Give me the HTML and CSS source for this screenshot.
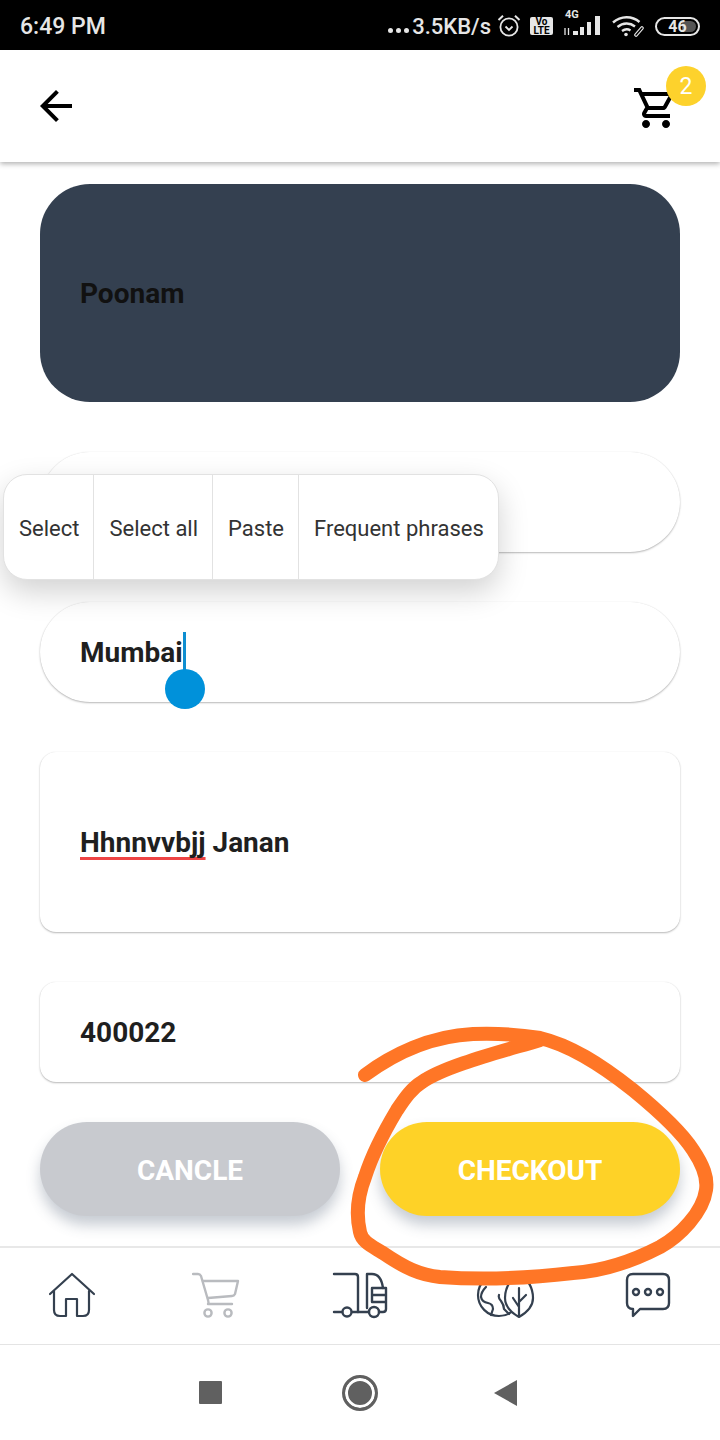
FILE: index.html
```html
<!DOCTYPE html>
<html>
<head>
  <title>Checkout</title>
  <link rel="stylesheet" href="styles.css">
</head>
<body>
  <div class="screen">
    <div class="status-bar">
      <span class="clock">6:49 PM</span>
      <div class="status-right">
        <span class="dots"><i></i><i></i><i></i></span>
        <span class="speed">3.5KB/s</span>
        <svg class="st-alarm" width="24" height="24" viewBox="0 0 24 24" fill="none" stroke="#e6e6e6" stroke-width="1.8">
          <circle cx="12" cy="13" r="8.6"/>
          <path d="M8.5 12.5l3.5 3.5 3.5-3.5"/>
          <path d="M1.5 6L6 1.8M22.5 6L18 1.8" stroke-width="2"/>
        </svg>
        <span class="volte"><span>Vo</span><span>LTE</span></span>
        <div class="signal">
          <span class="four-g">4G</span>
          <svg width="37" height="20" viewBox="0 0 37 20" fill="#e6e6e6">
            <path d="M2 12v7M5.5 12v7" stroke="#e6e6e6" stroke-width="1.3"/>
            <rect x="10" y="15" width="5" height="4"/>
            <rect x="17" y="11" width="4" height="8"/>
            <rect x="24" y="6" width="4" height="13"/>
            <rect x="32" y="0" width="5" height="19"/>
          </svg>
        </div>
        <svg class="st-wifi" width="32" height="22" viewBox="0 0 32 22" fill="none" stroke="#e6e6e6" stroke-width="2.4">
          <path d="M1 7.5C9 .5 20 .5 27.5 7"/>
          <path d="M5.5 12C11 7.5 18 7.5 23 11.5"/>
          <path d="M10 16c3-2.2 6-2.2 8.5-.5"/>
          <circle cx="14" cy="19.5" r="1.8" fill="#e6e6e6" stroke="none"/>
          <path d="M24 20l6-7" stroke-width="3.6" stroke-linecap="round"/>
          <path d="M24 20l6-7" stroke="#000" stroke-width="1.4" stroke-linecap="round"/>
        </svg>
        <div class="battery"><span class="battery-level"></span><span class="battery-num">46</span></div>
      </div>
    </div>

    <header class="app-bar">
      <svg class="back" width="48" height="48" viewBox="0 0 24 24" fill="#000">
        <path d="M20 11H7.83l5.59-5.59L12 4l-8 8 8 8 1.41-1.41L7.83 13H20v-2z"/>
      </svg>
      <div class="cart">
        <svg width="48" height="48" viewBox="0 0 24 24" fill="#000">
          <path d="M15.55 13c.75 0 1.41-.41 1.75-1.03l3.58-6.49A.996.996 0 0 0 20.01 4H5.21l-.94-2H1v2h2l3.6 7.59-1.35 2.44C4.52 15.37 5.48 17 7 17h12v-2H7l1.1-2h7.45zM6.16 6h12.15l-2.76 5H8.53L6.16 6zM7 18c-1.1 0-1.99.9-1.99 2S5.9 22 7 22s2-.9 2-2-.9-2-2-2zm10 0c-1.1 0-1.99.9-1.99 2s.89 2 1.99 2 2-.9 2-2-.9-2-2-2z"/>
        </svg>
        <span class="badge">2</span>
      </div>
    </header>

    <main class="form">
      <div class="field field-dark">Poonam</div>
      <div class="field field-round"></div>
      <div class="field field-round">
        <span>Mumbai</span><span class="caret"></span>
        <span class="handle"></span>
      </div>
      <div class="field field-tall"><span class="typo">Hhnnvvbjj</span>&nbsp;Janan</div>
      <div class="field field-short">400022</div>
      <div class="buttons">
        <button class="btn btn-cancel">CANCLE</button>
        <button class="btn btn-checkout">CHECKOUT</button>
      </div>
    </main>

    <nav class="tabs">
      <div class="tab">
        <svg width="48" height="48" viewBox="0 0 48 48" fill="none" stroke="#34404f" stroke-width="2.2" stroke-linecap="round" stroke-linejoin="round">
          <path d="M2 22L24 2l22 20"/>
          <path d="M6 19v19q0 6 6 6h6V27h11v17h6q6 0 6-6V19"/>
        </svg>
      </div>
      <div class="tab">
        <svg width="48" height="48" viewBox="0 0 48 48" fill="none" stroke="#b9bbbf" stroke-width="2.4" stroke-linecap="round" stroke-linejoin="round">
          <path d="M1 2h5q2 0 3 2l7 24q1 4 0 4h24"/>
          <path d="M11 9h35l-3 13q-1 2-3 2l-24 2"/>
          <circle cx="16" cy="41" r="3.6"/>
          <circle cx="36" cy="41" r="3.6"/>
        </svg>
      </div>
      <div class="tab">
        <svg width="60" height="48" viewBox="0 0 60 48" fill="none" stroke="#34404f" stroke-width="2.4" stroke-linecap="round" stroke-linejoin="round">
          <path d="M4 2h21q3 0 3 3v35"/>
          <path d="M4 40h8M22 40h17"/>
          <circle cx="17" cy="40" r="4.5"/>
          <circle cx="44" cy="40" r="5"/>
          <path d="M37 2v34M37 2h5q9 0 11 14"/>
          <path d="M49 40h4q3 0 3-3V16H42v14h14M42 23h14"/>
        </svg>
      </div>
      <div class="tab">
        <svg width="64" height="48" viewBox="0 0 64 48" fill="none" stroke="#34404f" stroke-width="2.2" stroke-linecap="round" stroke-linejoin="round">
          <circle cx="27" cy="23" r="21"/>
          <path d="M47 1q-14 10-14 25 0 11 14 19 14-8 14-19Q61 11 47 1z" fill="#fff"/>
          <path d="M47 16v28M41 26l6 9M54 23l-7 7"/>
          <path d="M14 15q-5 5-5 10 1 5 7 6 5 1 5 6l-2 6"/>
          <path d="M27 23q-1 3 2 6 3 4 3 8l5 5"/>
        </svg>
      </div>
      <div class="tab">
        <svg width="48" height="48" viewBox="0 0 48 48" fill="none" stroke="#34404f" stroke-width="2.4" stroke-linecap="round" stroke-linejoin="round">
          <path d="M9 2h30q6 0 6 6v23q0 6-6 6H16l-7 7v-7q-6 0-6-6V8q0-6 6-6z"/>
          <circle cx="12" cy="20" r="3"/>
          <circle cx="24" cy="20" r="3"/>
          <circle cx="36" cy="20" r="3"/>
        </svg>
      </div>
    </nav>

    <div class="nav-bar">
      <span class="nav-square"></span>
      <span class="nav-circle"></span>
      <svg class="nav-back" width="24" height="26" viewBox="0 0 24 26" fill="#606060"><path d="M0 13L23 0v26z"/></svg>
    </div>

    <!-- text selection popup -->
    <div class="popup">
      <span>Select</span>
      <span>Select all</span>
      <span>Paste</span>
      <span>Frequent phrases</span>
    </div>

    <!-- hand drawn marker over the screenshot -->
    <svg class="scribble" width="720" height="1440" viewBox="0 0 720 1440" fill="none" stroke="#ff7626" stroke-width="14" stroke-linecap="round" stroke-linejoin="round">
      <path d="M365 1075C392 1055 430 1036 473 1034C500 1033 522 1035 540 1038C570 1045 600 1064 633 1090C655 1108 680 1130 693 1150C703 1165 708 1177 706 1190C703 1212 680 1236 660 1247C635 1260 605 1271 573 1273C530 1278 480 1280 440 1277C420 1275 405 1268 383 1253C372 1246 362 1242 360 1232C356 1215 358 1195 365 1177C372 1155 385 1130 397 1110C405 1098 412 1088 422 1082C445 1066 500 1052 540 1040"/>
    </svg>
  </div>
</body>
</html>
```

FILE: styles.css
```css
* {
  box-sizing: border-box;
}
body {
  margin: 0;
  font-family: Roboto, Arial, sans-serif;
  background: #fff;
}
.screen {
  position: relative;
  width: 720px;
  height: 1440px;
  overflow: hidden;
  display: flex;
  flex-direction: column;
}

/* status bar */
.status-bar {
  height: 50px;
  background: #000;
  color: #e6e6e6;
  display: flex;
  align-items: center;
  justify-content: space-between;
  padding: 2px 20px 0;
  font-size: 23px;
  font-weight: 500;
}
.status-right {
  display: flex;
  align-items: center;
}
.speed {
  font-size: 22px;
  white-space: nowrap;
}
.dots {
  display: flex;
  gap: 3px;
  margin: 9px 3px 0 0;
}
.dots i {
  width: 5px;
  height: 5px;
  border-radius: 50%;
  background: #e6e6e6;
}
.st-alarm {
  margin-left: 6px;
}
.volte {
  width: 23px;
  height: 18px;
  margin-left: 9px;
  background: #e6e6e6;
  color: #000;
  border-radius: 2px;
  display: flex;
  flex-direction: column;
  align-items: center;
  font-size: 10px;
  font-weight: 700;
  line-height: 9px;
}
.signal {
  position: relative;
  width: 37px;
  height: 20px;
  margin-left: 10px;
}
.signal svg {
  display: block;
}
.four-g {
  position: absolute;
  left: 2px;
  top: -7px;
  font-size: 11px;
  line-height: 11px;
  font-weight: 700;
}
.st-wifi {
  margin-left: 12px;
}
.battery {
  position: relative;
  width: 45px;
  height: 19px;
  margin-left: 11px;
  border: 2px solid #e6e6e6;
  border-radius: 10px;
  display: flex;
  align-items: center;
  justify-content: center;
}
.battery-level {
  position: absolute;
  right: 2px;
  top: 2px;
  bottom: 2px;
  width: 14px;
  background: #555;
  border-radius: 0 6px 6px 0;
}
.battery-num {
  position: relative;
  font-size: 16px;
  font-weight: 700;
}

/* app bar */
.app-bar {
  position: relative;
  z-index: 1;
  height: 112px;
  background: #fff;
  display: flex;
  align-items: center;
  justify-content: space-between;
  padding: 0 40px 0 32px;
  box-shadow: 0 2px 5px rgba(0, 0, 0, 0.3);
}
.cart {
  position: relative;
  height: 48px;
  margin-top: 4px;
}
.badge {
  position: absolute;
  left: 34px;
  top: -18px;
  width: 40px;
  height: 40px;
  border-radius: 50%;
  background: #fdd22c;
  color: #fff;
  font-size: 23px;
  display: flex;
  align-items: center;
  justify-content: center;
}

/* form */
.form {
  flex: 1;
  padding: 22px 40px 0;
  display: flex;
  flex-direction: column;
  gap: 50px;
}
.field {
  position: relative;
  background: #fff;
  padding: 0 40px;
  display: flex;
  align-items: center;
  color: #1f1f1f;
  font-size: 28px;
  font-weight: 700;
  box-shadow: 0 1px 2px rgba(0, 0, 0, 0.28), 0 0 1px rgba(0, 0, 0, 0.1);
}
.field-dark {
  height: 218px;
  background: #344050;
  color: #111;
  border-radius: 50px;
  box-shadow: none;
}
.field-round {
  height: 100px;
  border-radius: 50px;
}
.field-tall {
  height: 180px;
  border-radius: 16px;
}
.field-short {
  height: 100px;
  border-radius: 16px;
}
.typo {
  text-decoration: underline #ee4444 3px;
  text-decoration-skip-ink: none;
  text-underline-offset: 5px;
}
.caret {
  width: 3px;
  height: 40px;
  background: #0d8ed1;
}
.handle {
  position: absolute;
  left: 125px;
  top: 67px;
  width: 40px;
  height: 40px;
  border-radius: 50%;
  background: #0091da;
}
.buttons {
  display: flex;
  gap: 40px;
  margin-top: -10px;
}
.btn {
  width: 300px;
  height: 94px;
  padding-top: 3px;
  border: none;
  border-radius: 47px;
  color: #fff;
  font-family: Roboto, Arial, sans-serif;
  font-size: 28px;
  font-weight: 700;
  box-shadow: 0 9px 14px rgba(70, 85, 110, 0.3);
}
.btn-cancel {
  background: #c8cacf;
}
.btn-checkout {
  background: #fed227;
}

/* bottom tabs */
.tabs {
  height: 99px;
  flex-shrink: 0;
  display: flex;
  border-top: 2px solid #e8e8e8;
  border-bottom: 1px solid #e4e4e4;
  padding-top: 24px;
}
.tab {
  width: 144px;
  display: flex;
  justify-content: center;
}
.tab svg {
  display: block;
}

/* android nav */
.nav-bar {
  height: 95px;
  flex-shrink: 0;
  background: #fff;
  display: flex;
  align-items: center;
  padding-left: 199px;
}
.nav-square {
  width: 23px;
  height: 23px;
  background: #606060;
  border-radius: 1px;
}
.nav-circle {
  width: 36px;
  height: 36px;
  margin-left: 120px;
  border-radius: 50%;
  background: #606060;
  border: 3px solid #606060;
  box-shadow: inset 0 0 0 3px #fff;
}
.nav-back {
  margin-left: 116px;
}

/* overlays */
.popup {
  position: absolute;
  left: 3px;
  top: 474px;
  height: 106px;
  background: #fff;
  border-radius: 24px;
  border: 1px solid #e2e2e2;
  display: flex;
  color: #333;
  font-size: 22px;
  box-shadow: 0 12px 30px rgba(0, 0, 0, 0.18);
}
.popup span {
  display: flex;
  align-items: center;
  padding: 3px 14px 0 15px;
  border-right: 1px solid #e2e2e2;
}
.popup span:last-child {
  border-right: none;
}
.scribble {
  position: absolute;
  left: 0;
  top: 0;
  pointer-events: none;
}
```
